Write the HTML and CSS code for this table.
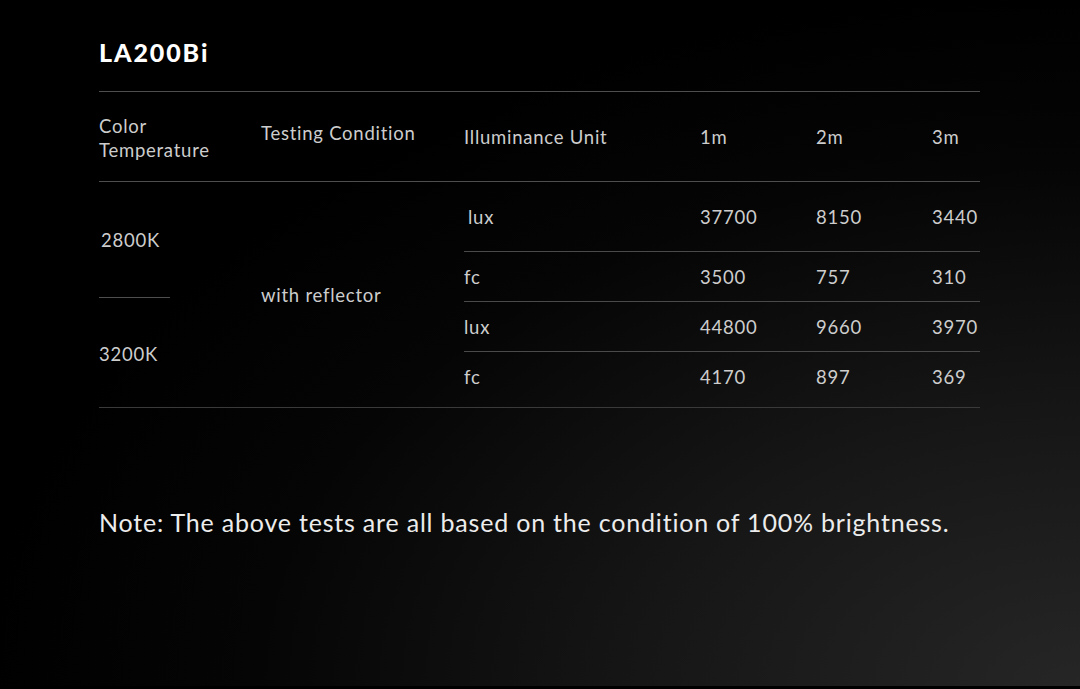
FILE: index.html
```html
<!DOCTYPE html>
<html>
<head>
<meta charset="utf-8">
<link rel="stylesheet" href="styles.css">
</head>
<body>
<main class="page">
  <h1 class="title">LA200Bi</h1>
  <div class="table">
    <div class="head">
      <div class="h h-color">Color<br>Temperature</div>
      <div class="h h-test">Testing Condition</div>
      <div class="h">Illuminance Unit</div>
      <div class="h">1m</div>
      <div class="h">2m</div>
      <div class="h">3m</div>
    </div>
    <div class="body">
      <div class="temps">
        <div class="temp temp-a">2800K</div>
        <div class="temp-rule"></div>
        <div class="temp temp-b">3200K</div>
      </div>
      <div class="cond">with reflector</div>
      <div class="rows">
        <div class="row row-first"><span class="unit unit-indent">lux</span><span>37700</span><span>8150</span><span>3440</span></div>
        <div class="row"><span class="unit">fc</span><span>3500</span><span>757</span><span>310</span></div>
        <div class="row"><span class="unit">lux</span><span>44800</span><span>9660</span><span>3970</span></div>
        <div class="row row-last"><span class="unit">fc</span><span>4170</span><span>897</span><span>369</span></div>
      </div>
    </div>
  </div>
  <p class="note">Note: The above tests are all based on the condition of 100% brightness.</p>
</main>
<div class="bottom-strip"></div>
</body>
</html>
```

FILE: styles.css
```css
html, body {
  margin: 0;
  padding: 0;
}
body {
  width: 1080px;
  height: 689px;
  overflow: hidden;
  background: radial-gradient(ellipse 1100px 700px at 100% 100%, #262626 0%, #161616 40%, #050505 75%, #000 100%);
  font-family: Lato, "Open Sans", sans-serif;
  color: #cdcdcd;
  display: flex;
  flex-direction: column;
}
.page {
  flex: 1;
  padding: 0 100px 0 99px;
}
.title {
  margin: 0;
  padding: 37px 0 24px;
  font-size: 25px;
  font-weight: 900;
  line-height: 30px;
  color: #fff;
  letter-spacing: 1.9px;
}
.table {
  width: 881px;
  border-top: 1px solid #4e4e4e;
  font-size: 18.5px;
  letter-spacing: 0.75px;
}
.head {
  display: grid;
  grid-template-columns: 162px 203px 236px 116px 116px 48px;
  height: 89px;
  align-items: center;
  border-bottom: 1px solid #4e4e4e;
}
.h {
  white-space: nowrap;
  line-height: 24px;
}
.h-color {
  margin-top: 2px;
}
.h-test {
  margin-bottom: 7px;
}
.body {
  display: grid;
  grid-template-columns: 162px 203px 516px;
  border-bottom: 1px solid #3a3a3a;
}
.temps {
  display: flex;
  flex-direction: column;
}
.temp {
  display: flex;
  align-items: center;
}
.temp-a {
  height: 115px;
  padding-left: 2px;
}
.temp-rule {
  width: 71px;
  height: 1px;
  background: #4e4e4e;
}
.temp-b {
  height: 109px;
  padding-top: 2px;
  box-sizing: border-box;
}
.cond {
  display: flex;
  align-items: center;
}
.rows {
  display: flex;
  flex-direction: column;
}
.row {
  display: grid;
  grid-template-columns: 236px 116px 116px 48px;
  align-items: center;
  height: 49px;
  border-bottom: 1px solid #4a4a4a;
}
.row-first {
  height: 69px;
}
.row-last {
  height: 55px;
  border-bottom: none;
  padding-bottom: 5px;
  box-sizing: border-box;
}
.unit-indent {
  padding-left: 4px;
}
.note {
  margin: 99px 0 0;
  font-size: 25px;
  line-height: 30px;
  color: #ececec;
  letter-spacing: 0.8px;
  white-space: nowrap;
}
.bottom-strip {
  height: 3px;
  background: #000;
}
```
